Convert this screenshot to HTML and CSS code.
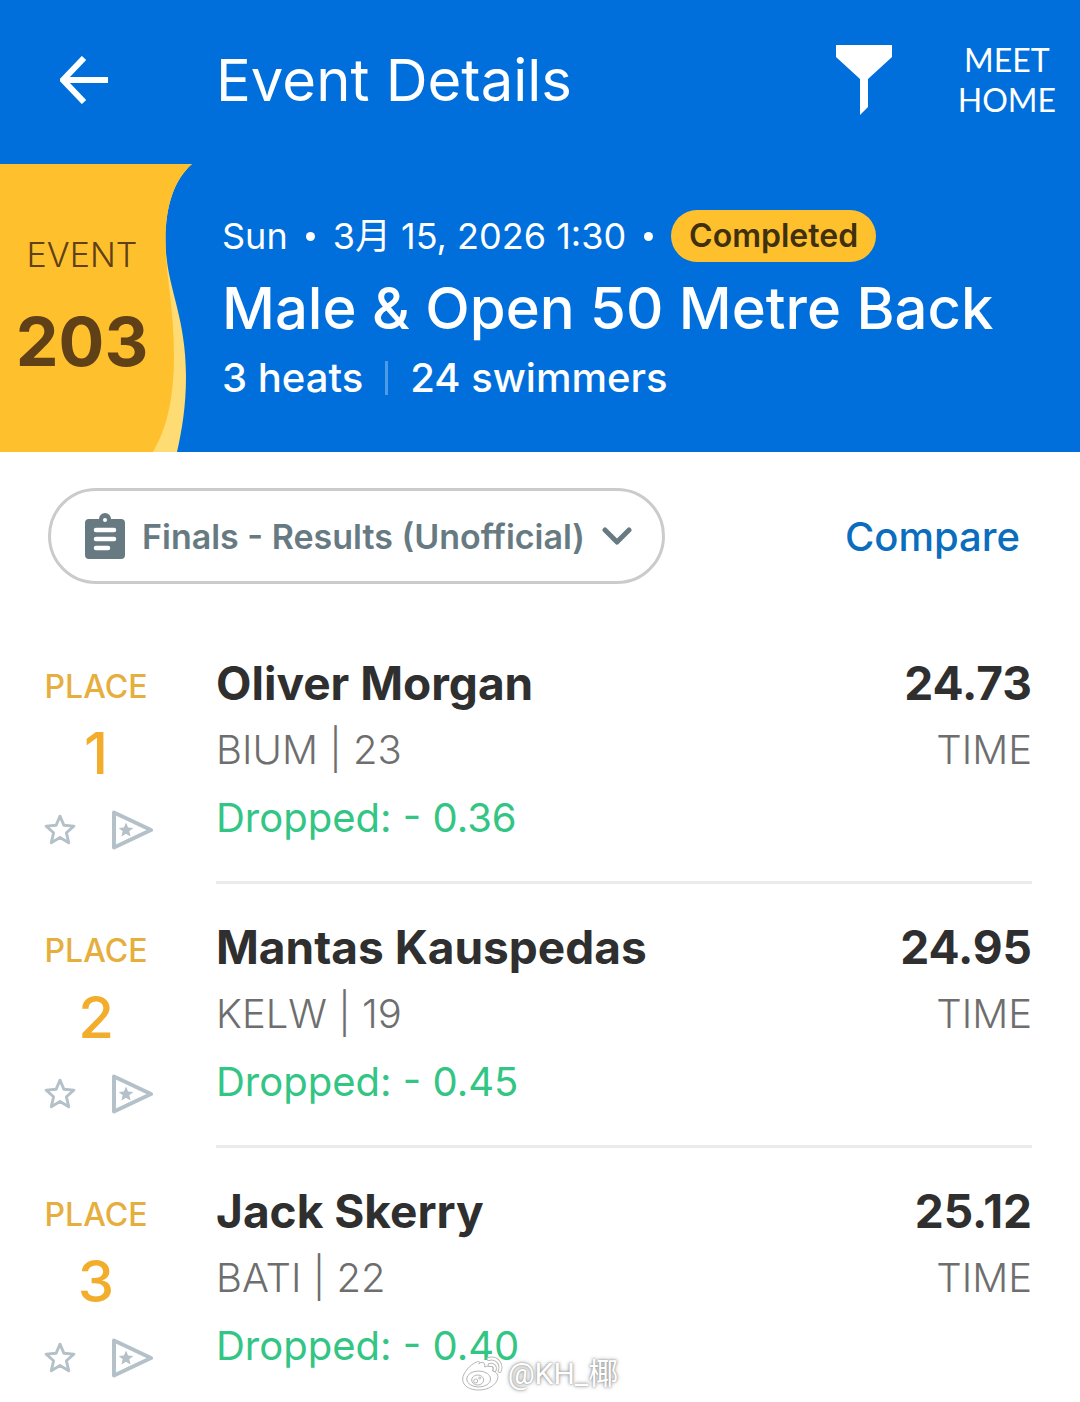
FILE: index.html
```html
<!DOCTYPE html>
<html lang="en">
<head>
    <meta charset="UTF-8">
    <meta name="viewport" content="width=device-width, initial-scale=1.0">
    <title>Event Details</title>
    <link rel="stylesheet" href="styles.css">
</head>
<body>

    <!-- Shared icons -->
    <svg class="sprite" aria-hidden="true">
        <symbol id="icon-star" viewBox="1 1 30 30">
            <path d="M16 3l3.700 8.600 9.300.800-7 6.200 2.200 9.400-8.200-4.900-8.200 4.900 2.200-9.400-7-6.200 9.300-.800z" fill="none" stroke="#b4c1c8" stroke-width="2.700" stroke-linejoin="round"/>
        </symbol>
        <symbol id="icon-flag" viewBox="0 0 44 40">
            <path d="M4 2.500v35L41 20z" fill="none" stroke="#b4c1c8" stroke-width="4" stroke-linejoin="round"/>
            <path d="M16 12.500l2.100 5 5.200.400-4 3.400 1.300 5.200-4.600-2.800-4.600 2.800 1.300-5.200-4-3.400 5.200-.400z" fill="#b4c1c8"/>
        </symbol>
    </svg>

    <header class="topbar">
        <button class="back-btn" type="button" aria-label="Back">
            <svg width="48" height="48" viewBox="0 0 48 48"><path d="M24 2L3 24l21 22M3 24h45" fill="none" stroke="#fff" stroke-width="6"/></svg>
        </button>
        <h1>Event Details</h1>
        <button class="filter-btn" type="button" aria-label="Filter">
            <svg width="56" height="70" viewBox="0 0 56 70"><path d="M0 0h56v12L32 34v28l-8 8V34L0 12z" fill="#fff"/></svg>
        </button>
        <a class="meet-home" href="#">MEET<br>HOME</a>
    </header>

    <section class="event">
        <div class="event-badge">
            <svg class="wave" viewBox="0 0 192 288" preserveAspectRatio="none" aria-hidden="true">
                <path d="M0 0H192C174 16 165.500 42 165.500 76C165.500 122 186 150 186 212C186 242 182 266 177 288H0Z" fill="#ffdc73"/>
                <path d="M0 0H192C174 16 165.500 42 165.500 76C165.500 112 174 140 174 192C174 236 166 266 153 288H0Z" fill="#ffc02e"/>
            </svg>
            <p class="event-label">EVENT</p>
            <p class="event-number">203</p>
        </div>
        <div class="event-info">
            <p class="event-date">
                <span>Sun</span>
                <i class="dot"></i>
                <span>3月 15, 2026 1:30</span>
                <i class="dot"></i>
                <span class="status">Completed</span>
            </p>
            <h2>Male &amp; Open 50 Metre Back</h2>
            <p class="event-stats"><span>3 heats</span><i class="bar"></i><span>24 swimmers</span></p>
        </div>
    </section>

    <div class="toolbar">
        <label class="round-picker">
            <svg width="42" height="48" viewBox="0 0 42 48" aria-hidden="true">
                <path d="M5 7h10a6 6 0 0 1 12 0h10a4 4 0 0 1 4 4v32a4 4 0 0 1-4 4H5a4 4 0 0 1-4-4V11a4 4 0 0 1 4-4z" fill="#677a82"/>
                <circle cx="21" cy="8" r="2" fill="#fff"/>
                <path d="M12 18h18M12 27h18M12 36h12" stroke="#fff" stroke-width="4.500" stroke-linecap="round"/>
            </svg>
            <select aria-label="Round">
                <option>Finals - Results (Unofficial)</option>
            </select>
            <svg width="30" height="20" viewBox="0 0 30 20" aria-hidden="true"><path d="M3 4l12 12L27 4" fill="none" stroke="#677a82" stroke-width="5" stroke-linecap="round" stroke-linejoin="round"/></svg>
        </label>
        <a class="compare" href="#">Compare</a>
    </div>

    <ol class="results">
        <li class="result">
            <div class="place">
                <p class="place-label">PLACE</p>
                <p class="place-number">1</p>
                <div class="place-actions">
                    <button type="button" aria-label="Favourite"><svg width="32" height="32"><use href="#icon-star"/></svg></button>
                    <button type="button" aria-label="Follow"><svg width="44" height="40"><use href="#icon-flag"/></svg></button>
                </div>
            </div>
            <div class="swim">
                <div class="swimmer">
                    <h3>Oliver Morgan</h3>
                    <p class="club">BIUM | 23</p>
                    <p class="dropped">Dropped: - 0.36</p>
                </div>
                <div class="time">
                    <p class="time-value">24.73</p>
                    <p class="club">TIME</p>
                </div>
            </div>
        </li>
        <li class="result">
            <div class="place">
                <p class="place-label">PLACE</p>
                <p class="place-number">2</p>
                <div class="place-actions">
                    <button type="button" aria-label="Favourite"><svg width="32" height="32"><use href="#icon-star"/></svg></button>
                    <button type="button" aria-label="Follow"><svg width="44" height="40"><use href="#icon-flag"/></svg></button>
                </div>
            </div>
            <div class="swim">
                <div class="swimmer">
                    <h3>Mantas Kauspedas</h3>
                    <p class="club">KELW | 19</p>
                    <p class="dropped">Dropped: - 0.45</p>
                </div>
                <div class="time">
                    <p class="time-value">24.95</p>
                    <p class="club">TIME</p>
                </div>
            </div>
        </li>
        <li class="result">
            <div class="place">
                <p class="place-label">PLACE</p>
                <p class="place-number">3</p>
                <div class="place-actions">
                    <button type="button" aria-label="Favourite"><svg width="32" height="32"><use href="#icon-star"/></svg></button>
                    <button type="button" aria-label="Follow"><svg width="44" height="40"><use href="#icon-flag"/></svg></button>
                </div>
            </div>
            <div class="swim">
                <div class="swimmer">
                    <h3>Jack Skerry</h3>
                    <p class="club">BATI | 22</p>
                    <p class="dropped">Dropped: - 0.40</p>
                </div>
                <div class="time">
                    <p class="time-value">25.12</p>
                    <p class="club">TIME</p>
                </div>
            </div>
        </li>
    </ol>

    <div class="watermark">
        <svg width="42" height="36" viewBox="0 0 42 36" aria-hidden="true">
            <g fill="#fff" stroke="#b5b5b5" stroke-width="1">
                <path d="M17 8c3-3 7-2 6 3 5-2 10-1 8 4 4 1 6 4 5 8-2 6-9 11-19 11C8 34 1 30 1 23 1 17 9 8 15 6c3-1 4 0 2 2z"/>
                <ellipse cx="17" cy="23" rx="12" ry="8"/>
                <ellipse cx="16" cy="24" rx="6" ry="5"/>
                <circle cx="14" cy="25" r="2"/>
                <circle cx="18" cy="22" r="1"/>
            </g>
            <g fill="none" stroke-linecap="round">
                <path d="M27 3c8-2 14 5 11 12M28 9c4-1 6 2 5 5" stroke="#bbb" stroke-width="4"/>
                <path d="M27 3c8-2 14 5 11 12M28 9c4-1 6 2 5 5" stroke="#fff" stroke-width="2"/>
            </g>
        </svg>
        <span>@KH_椰</span>
    </div>

</body>
</html>
```

FILE: styles.css
```css
* {
    margin: 0;
    padding: 0;
    box-sizing: border-box;
}

body {
    font-family: Inter, "Noto Sans CJK SC", sans-serif;
    background: #fff;
    color: #2f2f2f;
    height: 100vh;
    display: flex;
    flex-direction: column;
    position: relative;
    overflow: hidden;
}

button {
    background: none;
    border: none;
    cursor: pointer;
}

a {
    text-decoration: none;
}

svg {
    display: block;
    flex: none;
}

.sprite {
    position: absolute;
    width: 0;
    height: 0;
}

/* Top bar */
.topbar {
    flex: none;
    display: flex;
    align-items: center;
    height: 164px;
    padding: 0 24px 4px 60px;
    background: #006fdb;
    color: #fff;
}

.back-btn {
    width: 156px;
}

.topbar h1 {
    flex: 1;
    font-size: 58px;
    font-weight: 400;
}

.meet-home {
    margin-left: 66px;
    font-family: Lato, sans-serif;
    font-size: 32px;
    line-height: 40px;
    text-align: center;
    color: #fff;
}

/* Event banner */
.event {
    flex: none;
    display: flex;
    gap: 30px;
    background: #006fdb;
    color: #fff;
}

.event-badge {
    position: relative;
    width: 192px;
    padding: 0 28px 20px 0;
    display: flex;
    flex-direction: column;
    justify-content: center;
    text-align: center;
    color: #5f4017;
}

.wave {
    position: absolute;
    inset: 0;
    width: 100%;
    height: 100%;
}

.event-label {
    position: relative;
    font-size: 34px;
    font-weight: 300;
    line-height: 86px;
}

.event-number {
    position: relative;
    font-size: 68px;
    font-weight: 700;
    line-height: 86px;
}

.event-info {
    flex: 1;
    padding: 46px 0 40px;
}

.event-date {
    display: flex;
    align-items: center;
    gap: 18px;
    height: 52px;
    font-size: 36px;
    line-height: 52px;
}

.dot {
    width: 9px;
    height: 9px;
    border-radius: 50%;
    background: #fff;
}

.status {
    padding: 0 18px;
    border-radius: 26px;
    background: #ffc02e;
    color: #40300f;
    font-size: 32px;
    font-weight: 600;
}

.event-info h2 {
    margin-top: 10px;
    font-size: 58px;
    font-weight: 500;
    line-height: 72px;
}

.event-stats {
    display: flex;
    align-items: center;
    gap: 22px;
    font-size: 40px;
    font-weight: 500;
    line-height: 68px;
}

.bar {
    width: 3px;
    height: 34px;
    background: #4d9be8;
}

/* Round picker and compare */
.toolbar {
    flex: none;
    display: flex;
    align-items: center;
    justify-content: space-between;
    padding: 36px 60px 36px 48px;
}

.round-picker {
    display: flex;
    align-items: center;
    gap: 16px;
    height: 96px;
    padding: 0 30px 0 33px;
    border: 3px solid #cbcbcb;
    border-radius: 48px;
}

.round-picker select {
    appearance: none;
    border: none;
    background: none;
    color: #677a82;
    font-family: inherit;
    font-size: 34px;
    font-weight: 600;
}

.compare {
    color: #0a6dbe;
    font-size: 40px;
    font-weight: 500;
}

/* Results */
.results {
    flex: 1;
    min-height: 0;
    overflow-y: auto;
    scrollbar-width: none;
    list-style: none;
}

.result {
    display: flex;
    gap: 24px;
    padding-right: 48px;
    line-height: 66px;
}

.place {
    width: 192px;
    padding-top: 34px;
    text-align: center;
}

.place-label {
    color: #e5ae3d;
    font-size: 32px;
    font-weight: 500;
}

.place-number {
    color: #f3ad2c;
    font-size: 58px;
    font-weight: 500;
}

.place-actions {
    display: flex;
    justify-content: center;
    margin-top: 24px;
}

.place-actions button {
    display: flex;
    align-items: center;
    justify-content: center;
    width: 72px;
    height: 40px;
}

.swim {
    flex: 1;
    display: flex;
    justify-content: space-between;
    padding: 30px 0 29px;
    border-bottom: 3px solid #ebebeb;
}

.swim h3,
.time-value {
    font-size: 46px;
    font-weight: 700;
}

.club,
.dropped {
    font-size: 40px;
    line-height: 68px;
}

.club {
    color: #6e6e6e;
    font-weight: 300;
}

.dropped {
    color: #32c584;
}

.time {
    text-align: right;
}

/* Watermark */
.watermark {
    position: absolute;
    left: 50%;
    bottom: 10px;
    transform: translateX(-50%);
    display: flex;
    align-items: center;
    gap: 4px;
    color: #fff;
    font-family: Roboto, "Noto Sans CJK SC", sans-serif;
    font-size: 30px;
    line-height: 36px;
    text-shadow: 0 0 2px #888, 0 0 4px #999;
}
```
